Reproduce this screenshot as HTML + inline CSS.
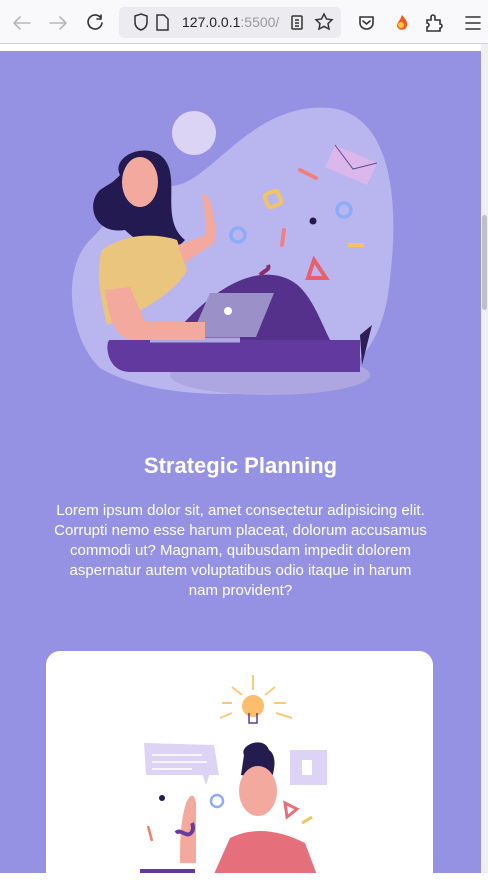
<!DOCTYPE html>
<html><head><meta charset="utf-8"><style>
*{margin:0;padding:0;box-sizing:border-box}
body{width:488px;height:873px;overflow:hidden;background:#fff;font-family:"Liberation Sans",sans-serif;position:relative}
.chrome{position:absolute;top:0;left:0;width:488px;height:44px;background:#f9f9fb;border-bottom:1px solid #d0d0d6}
.url{position:absolute;left:119px;top:7px;width:222px;height:31px;background:#ececf0;border-radius:5px}
.page{position:absolute;top:51px;left:0;width:481px;height:822px;background:#9592e3}
.sb{position:absolute;top:44px;left:481px;width:7px;height:829px;background:#f0f0f0}
.thumb{position:absolute;top:215px;left:482px;width:5px;height:95px;background:#c0c0c0;border-radius:3px}
h2{position:absolute;top:453px;left:0;width:481px;text-align:center;color:#fff;font-size:22px;font-weight:bold}
p.t{position:absolute;top:501px;left:53px;width:375px;text-align:center;color:#fff;font-size:15px;line-height:20px}
.card{position:absolute;top:651px;left:46px;width:387px;height:240px;background:#fff;border-radius:14px}
</style></head><body>
<div class="chrome">
<svg width="488" height="44" style="position:absolute;left:0;top:0" fill="none" stroke-width="1.6" stroke-linecap="round">
<path d="M14 23h16M14 23l6-6M14 23l6 6" stroke="#b8b8bc"/>
<path d="M50 23h16M66 23l-6-6M66 23l-6 6" stroke="#b8b8bc"/>
<path d="M100 17a7 7 0 1 0 2 6M101 15v4h-4" stroke="#333"/>
<path d="M466 17h14M466 23h14M466 29h14" stroke="#333"/>
<path d="M360 17h13v6a6.5 6 0 0 1-13 0z" stroke="#333"/><path d="M363 21l3.5 3 3.5-3" stroke="#333"/>
<path d="M427 20h4v-3a2 2 0 0 1 4 0v3h5v4a2 2 0 0 1 0 4v3h-13v-4a2 2 0 0 0 0-4z" stroke="#333"/>
<path d="M402 15c4 5 7 8 4 13-3 3-8 2-9-2 0-4 3-5 5-11z" fill="#f25a1e" stroke="none"/>
<circle cx="401" cy="25" r="3" fill="#ffc53d" stroke="none"/>
</svg>
<div class="url">
<svg width="222" height="31" style="position:absolute;left:0;top:0" fill="none" stroke="#333" stroke-width="1.5">
<path d="M16 9l6-2 6 2v6c0 5-3 7-6 8-3-1-6-3-6-8z"/>
<path d="M38 8h7l4 4v11h-11z"/>
<rect x="173" y="9" width="10" height="13" rx="1"/><path d="M176 13h4M176 16h4M176 19h4"/>
<path d="M205 7l2.5 5 5.5.8-4 3.8 1 5.4-5-2.6-5 2.6 1-5.4-4-3.8 5.5-.8z"/>
</svg>
<span style="position:absolute;left:63px;top:7px;font-size:14px;color:#222">127.0.0.1<span style="color:#999">:5500/</span></span>
</div>
</div>
<div class="page"></div>
<div class="sb"></div><div class="thumb"></div>
<svg width="340" height="310" viewBox="0 0 340 310" style="position:absolute;left:60px;top:100px">
<path d="M110 86c40 0 80-85 160-78 60 6 70 90 60 170-5 60-30 100-90 110-60 10-150 10-200-20C10 240 0 170 30 140c25-25 40-54 80-54z" fill="#b9b5ee"/>
<ellipse cx="210" cy="275" rx="100" ry="20" fill="#aea6e0"/>
<circle cx="134" cy="33" r="22" fill="#dcd4f5"/>
<path d="M275 45l42 18-10 22-42-18z" fill="#dcb7ec"/>
<path d="M275 45l18 24 24-6" stroke="#5c4a93" fill="none"/>
<rect x="206" y="92" width="14" height="14" rx="3" fill="none" stroke="#f2c468" stroke-width="4" transform="rotate(-20 213 99)"/>
<circle cx="284" cy="110" r="7" fill="none" stroke="#8cadf5" stroke-width="3.5"/>
<circle cx="178" cy="135" r="7" fill="none" stroke="#8cadf5" stroke-width="3.5"/>
<circle cx="253" cy="121" r="3.5" fill="#231a4a"/>
<path d="M240 70l16 8M224 130l-2 15" stroke-width="4" stroke-linecap="round" stroke="#f08080"/>
<path d="M288 145h16" stroke="#f2c468" stroke-width="4"/>
<path d="M254 160l-6 18h18z" fill="none" stroke="#e8606a" stroke-width="4"/>
<path d="M50 240h250v32H70c-25 0-25-32-20-32z" fill="#62399f"/>
<path d="M110 240c30-40 80-80 120-60 20 10 30 40 40 60z" fill="#55318c"/>
<path d="M300 235l12-10-10 40z" fill="#2d1f55"/>
<path d="M150 193h64l-18 44h-65z" fill="#9b90c8"/>
<circle cx="168" cy="211" r="4" fill="#fff"/>
<path d="M90 240h90" stroke="#b0a8dd" stroke-width="5"/>
<path d="M60 75c-10-20 30-35 45-15 15 20 -5 60 20 80l-10 10c-25 0-40-10-50-20-30 5-40-25-25-40 15-10 10-5 20-15z" fill="#221a50"/>
<ellipse cx="80" cy="82" rx="18" ry="25" fill="#f4a99e"/>
<path d="M42 150c20-15 50-18 75-10l10 30c-10 20-40 40-80 55-10-40-10-60-5-75z" fill="#e9c57d"/>
<path d="M45 190c5 40 15 50 30 50h70v-18h-60l-15-35z" fill="#f4a99e"/>
<path d="M118 145l28-10c-2-15 0-30-5-42l8 5c5 15 8 30 5 45l-30 20z" fill="#f4a99e"/>
<path d="M200 175c5-5 10-5 8-10" stroke="#8b2d6e" stroke-width="4" fill="none"/>
</svg>
<h2>Strategic Planning</h2>
<p class="t">Lorem ipsum dolor sit, amet consectetur adipisicing elit. Corrupti nemo esse harum placeat, dolorum accusamus commodi ut? Magnam, quibusdam impedit dolorem aspernatur autem voluptatibus odio itaque in harum nam provident?</p>
<div class="card"></div>
<svg width="200" height="200" viewBox="0 0 200 200" style="position:absolute;left:140px;top:673px">
<g stroke="#fcc97a" stroke-width="2"><path d="M113 2v15M92 14l10 8M135 14l-10 8M82 30h10M134 30h12M80 45l12-5M136 40l16 5"/></g>
<circle cx="113" cy="33" r="11" fill="#fcbd6c"/>
<path d="M109 40v10h8v-10" stroke="#5b3c9a" fill="none" stroke-width="1.5"/>
<path d="M4 70l70 2 5 30H6z" fill="#ddd3f4"/><path d="M62 100l4 12 4-12z" fill="#ddd3f4"/>
<path d="M12 82h50M12 89h55M12 96h40" stroke="#fff" stroke-width="1.5"/>
<path d="M150 77h37v35h-37z" fill="#ddd3f4"/>
<path d="M162 87l10 0 0 15-10 0z" fill="#fff"/>
<path d="M104 82c-5-10 20-20 25-5 8 5 6 20 2 30l-30-5z" fill="#241b4f"/>
<ellipse cx="118" cy="118" rx="19" ry="25" fill="#f4a99e"/>
<path d="M90 165c20-10 45-10 75 5l15 40H70z" fill="#e5707b"/>
<path d="M46 130c5-10 8-10 10 0v60H40c0-20 0-40 6-60z" fill="#f4a99e"/>
<circle cx="22" cy="125" r="3" fill="#241b4f"/>
<circle cx="77" cy="128" r="6" fill="none" stroke="#8cadf5" stroke-width="2.5"/>
<path d="M145 130l12 6-10 8z" fill="none" stroke="#e5707b" stroke-width="3"/>
<path d="M8 153l4 15" stroke="#f08060" stroke-width="2.5"/>
<path d="M162 150l10-6" stroke="#f2c468" stroke-width="3"/>
<path d="M36 160c5-5 10 5 15 0 3-3 2-8 1-10" stroke="#6a3a9a" stroke-width="4" fill="none"/>
<path d="M0 196h55v8H0z" fill="#62399f"/>
</svg>
</body></html>
